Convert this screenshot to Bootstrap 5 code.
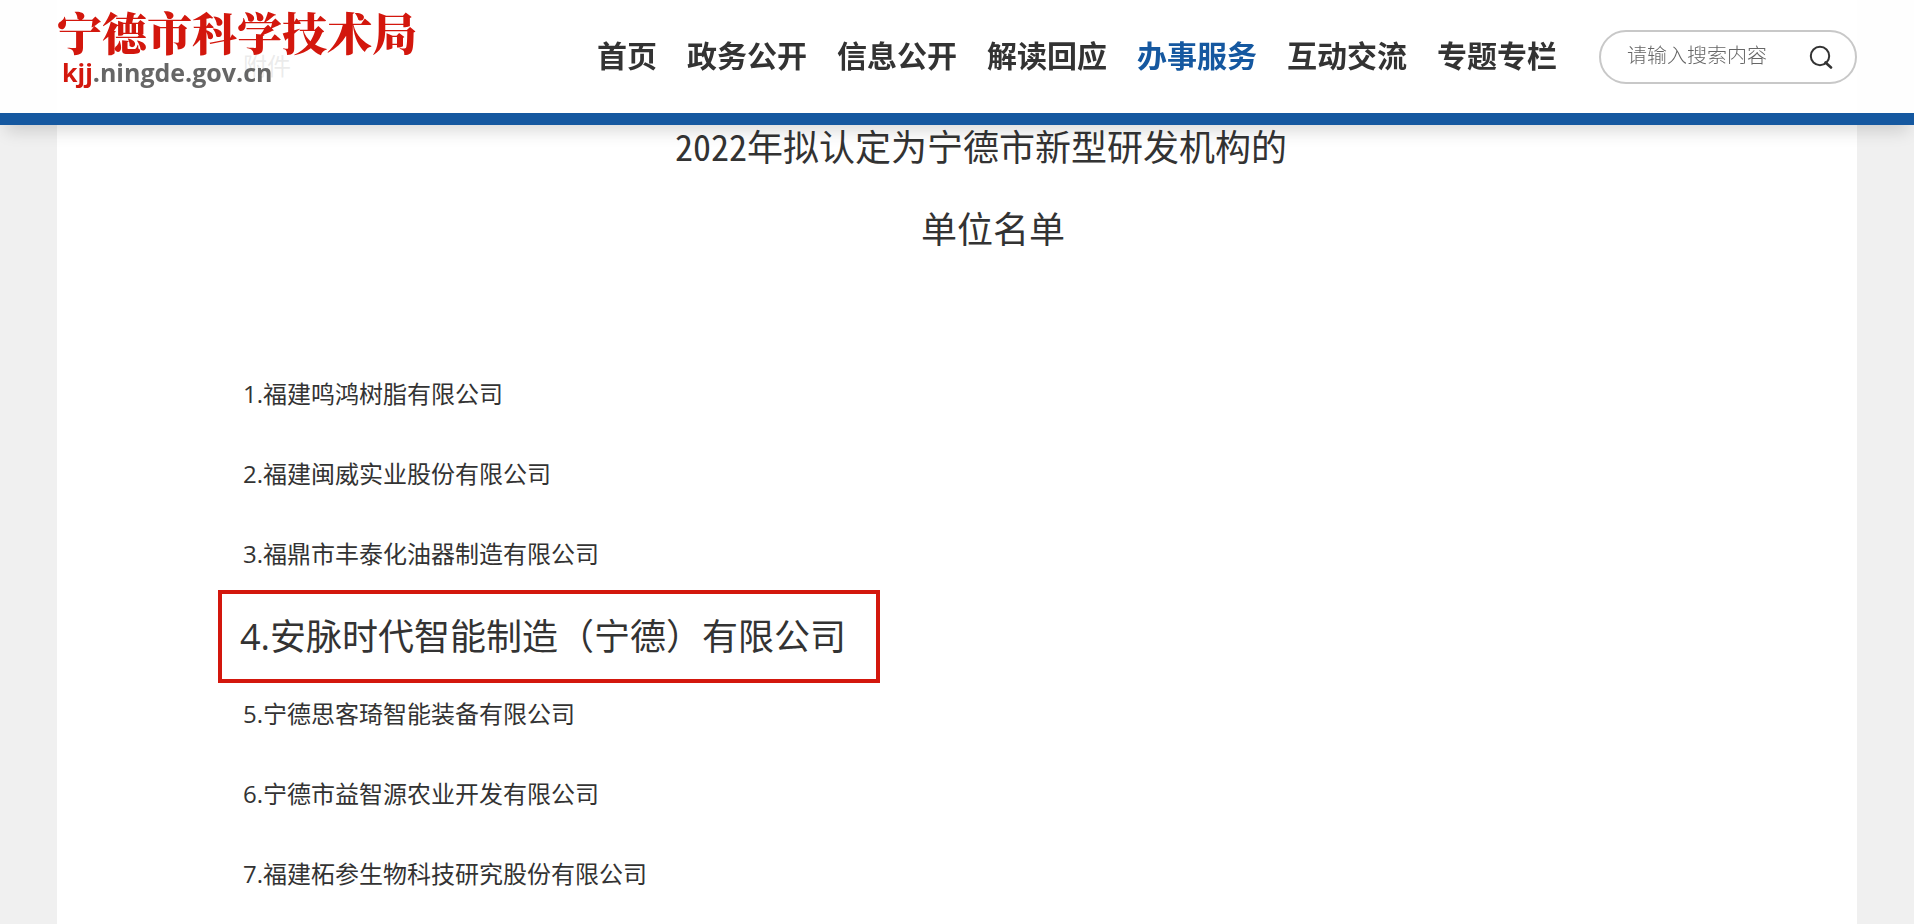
<!DOCTYPE html>
<html lang="zh-CN">
<head>
<meta charset="utf-8">
<meta name="viewport" content="width=device-width, initial-scale=1">
<title>宁德市科学技术局</title>
<link href="https://cdn.jsdelivr.net/npm/bootstrap@5.3.0/dist/css/bootstrap.min.css" rel="stylesheet">
<style>
  body { background: #f0f0f0; color: #333; font-family: "Open Sans", "Noto Sans CJK SC", sans-serif; }
  .page-width { max-width: 1800px; }
  .site-header { background: rgba(255, 255, 255, .9); border-bottom: 12px solid #1558a0; box-shadow: 0 12px 16px -6px rgba(0, 0, 0, .15); }
  .header-row { min-height: 113px; }
  .brand { padding-bottom: 20px; }
  .brand-name { font: 900 45px/50px "Noto Serif CJK SC", "Noto Sans CJK SC", serif; color: #d3170d; }
  .brand-host { font-size: 25px; line-height: 30px; color: #666; padding-left: 5px; }
  .brand-host span { color: #d3170d; }
  .main-menu { gap: 0 30px; margin-right: 42px; padding-bottom: 6px; }
  .main-menu a { font: 700 30px/40px "Noto Sans CJK SC", sans-serif; color: #333; text-decoration: none; white-space: nowrap; }
  .main-menu a.active, .main-menu a:hover { color: #1558a0; }
  .search-box { width: 258px; height: 54px; border: 2px solid #c8c8c8; padding: 0 22px 0 26px; }
  .search-box input { font: 300 20px/28px "Noto Sans CJK SC", sans-serif; min-width: 0; outline: 0; margin-bottom: 4px; }
  .search-box input::placeholder { color: #666; opacity: 1; }
  .article { min-height: 100vh; padding: 28px 186px 0; }
  .attachment { font-size: 24px; line-height: 76px; }
  .article-title { font: 400 36px/82px "Noto Sans CJK SC", sans-serif; font-feature-settings: "hwid"; margin-bottom: 88px; }
  .title-first { text-indent: 48px; }
  .title-second { text-indent: 72px; }
  .company-list { grid-auto-rows: 80px; align-items: center; font-size: 24px; line-height: 36px; }
  .company-list li { padding-bottom: 4px; }
  .company-list .highlighted { width: fit-content; margin-left: -25px; border: 4px solid #d3170d; padding: 19px 30px 18px 18px; font-size: 36px; line-height: 48px; }
</style>
</head>
<body>
<header class="site-header fixed-top">
  <div class="page-width header-row mx-auto d-flex align-items-center">
    <a href="#" class="brand text-decoration-none">
      <div class="brand-name">宁德市科学技术局</div>
      <div class="brand-host fw-bold"><span>kjj</span>.ningde.gov.cn</div>
    </a>
    <nav class="main-menu d-flex flex-wrap ms-auto" aria-label="主导航">
      <a href="#">首页</a>
      <a href="#">政务公开</a>
      <a href="#">信息公开</a>
      <a href="#">解读回应</a>
      <a href="#" class="active" aria-current="page">办事服务</a>
      <a href="#">互动交流</a>
      <a href="#">专题专栏</a>
    </nav>
    <form class="search-box rounded-pill d-flex align-items-center" role="search">
      <input class="border-0 bg-transparent p-0 flex-grow-1" type="search" placeholder="请输入搜索内容" aria-label="请输入搜索内容">
      <button type="button" class="border-0 bg-transparent p-0 d-flex" aria-label="搜索">
        <svg width="24" height="24" viewBox="0 0 24 24" fill="none" stroke="#333" stroke-width="2"><circle cx="11" cy="11" r="9.2"/><path d="M16.5 17.5 L22 22.5" stroke-width="2.6" stroke-linecap="round"/></svg>
      </button>
    </form>
  </div>
</header>
<main class="page-width article mx-auto bg-white">
  <p class="attachment mb-0">附件</p>
  <h1 class="article-title text-center mt-0">
    <span class="title-first d-block">2022年拟认定为宁德市新型研发机构的</span>
    <span class="title-second d-block">单位名单</span>
  </h1>
  <ul class="company-list list-unstyled d-grid mb-0">
    <li>1.福建鸣鸿树脂有限公司</li>
    <li>2.福建闽威实业股份有限公司</li>
    <li>3.福鼎市丰泰化油器制造有限公司</li>
    <li class="highlighted">4.安脉时代智能制造（宁德）有限公司</li>
    <li>5.宁德思客琦智能装备有限公司</li>
    <li>6.宁德市益智源农业开发有限公司</li>
    <li>7.福建柘参生物科技研究股份有限公司</li>
  </ul>
</main>
<script src="https://cdn.jsdelivr.net/npm/bootstrap@5.3.0/dist/js/bootstrap.bundle.min.js"></script>
</body>
</html>
